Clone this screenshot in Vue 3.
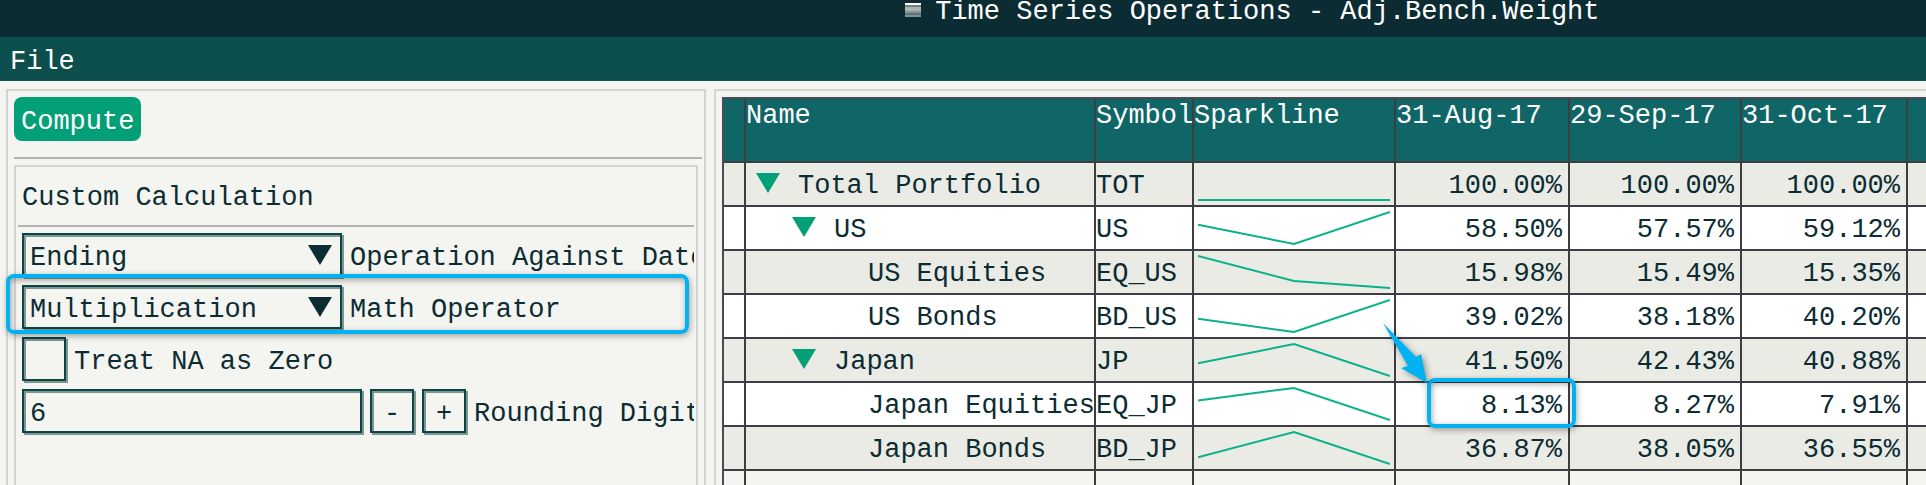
<script setup>
import { ref } from 'vue'

const dates = ['31-Aug-17', '29-Sep-17', '31-Oct-17']

const rows = [
  { name: 'Total Portfolio', symbol: 'TOT', level: 0, group: true, values: [100, 100, 100] },
  { name: 'US', symbol: 'US', level: 1, group: true, values: [58.5, 57.57, 59.12] },
  { name: 'US Equities', symbol: 'EQ_US', level: 2, values: [15.98, 15.49, 15.35] },
  { name: 'US Bonds', symbol: 'BD_US', level: 2, values: [39.02, 38.18, 40.2] },
  { name: 'Japan', symbol: 'JP', level: 1, group: true, values: [41.5, 42.43, 40.88] },
  { name: 'Japan Equities', symbol: 'EQ_JP', level: 2, values: [8.13, 8.27, 7.91], marked: true },
  { name: 'Japan Bonds', symbol: 'BD_JP', level: 2, values: [36.87, 38.05, 36.55] },
]

const operation = ref('Ending')
const operator = ref('Multiplication')
const treatNa = ref(false)
const digits = ref(6)

const percent = (v) => v.toFixed(2) + '%'

function sparkline(values) {
  const low = Math.min(...values)
  const range = Math.max(...values) - low || 1
  return values.map((v, i) => `${i * 96},${37 - ((v - low) / range) * 32}`).join(' ')
}
</script>

<template>
  <div class="app">
    <header class="titlebar">
      <div class="title">
        <svg class="title-icon" width="16" height="16" viewBox="0 0 16 16" aria-hidden="true">
          <path d="M0 1h16v2H0z" fill="#fff" />
          <path d="M0 3h16v2H0z" fill="#6d8084" />
          <path d="M0 5h16v4H0z" fill="#a9b4b6" />
          <path d="M0 9h16v2H0z" fill="#84959a" />
          <path d="M0 11h16v2H0z" fill="#5b7278" />
          <path d="M0 13h16v2H0z" fill="#7f9195" />
        </svg>
        <span>Time Series Operations - Adj.Bench.Weight</span>
      </div>
    </header>

    <nav class="menubar"><button type="button" class="menu">File</button></nav>

    <main class="body">
      <section class="side">
        <button type="button" class="compute">Compute</button>
        <hr class="rule">
        <form class="group" @submit.prevent>
          <h2 class="heading">Custom Calculation</h2>
          <hr class="rule">
          <div class="fields">
            <div class="field">
              <div class="combo">
                <select id="operation" v-model="operation" class="box">
                  <option>Ending</option>
                  <option>Beginning</option>
                </select>
                <svg class="combo-arrow" width="24" height="20" viewBox="0 0 24 20"><path d="M0 0h24L12 20z" /></svg>
              </div>
              <label for="operation">Operation Against Date</label>
            </div>
            <div class="field">
              <div class="combo">
                <select id="operator" v-model="operator" class="box">
                  <option>Multiplication</option>
                  <option>Division</option>
                </select>
                <svg class="combo-arrow" width="24" height="20" viewBox="0 0 24 20"><path d="M0 0h24L12 20z" /></svg>
              </div>
              <label for="operator">Math Operator</label>
              <span class="mark mark-field"></span>
            </div>
            <div class="field">
              <input id="treat-na" v-model="treatNa" type="checkbox" class="box check">
              <label for="treat-na">Treat NA as Zero</label>
            </div>
            <div class="field">
              <input id="digits" v-model="digits" type="text" class="box number">
              <button type="button" class="box step" aria-label="Decrease" @click="digits--">-</button>
              <button type="button" class="box step" aria-label="Increase" @click="digits++">+</button>
              <label for="digits">Rounding Digits</label>
            </div>
          </div>
        </form>
      </section>

      <section class="content">
        <table class="grid">
          <colgroup>
            <col class="c-handle"><col class="c-name"><col class="c-symbol"><col class="c-spark">
            <col class="c-first"><col class="c-second"><col class="c-third"><col>
          </colgroup>
          <thead>
            <tr>
              <th></th>
              <th>Name</th>
              <th>Symbol</th>
              <th>Sparkline</th>
              <th v-for="d in dates" :key="d">{{ d }}</th>
              <th></th>
            </tr>
          </thead>
          <tbody>
            <tr v-for="row in rows" :key="row.symbol">
              <td></td>
              <td>
                <div class="name" :class="'level-' + row.level">
                  <button v-if="row.group" type="button" class="toggle" :aria-label="'Collapse ' + row.name">
                    <svg width="24" height="20" viewBox="0 0 24 20"><path d="M0 0h24L12 20z" /></svg>
                  </button>
                  <span>{{ row.name }}</span>
                </div>
              </td>
              <td>{{ row.symbol }}</td>
              <td class="spark">
                <svg width="192" height="42" viewBox="0 0 192 42"><polyline :points="sparkline(row.values)" /></svg>
              </td>
              <td v-for="(v, i) in row.values" :key="i" class="value">
                {{ percent(v) }}
                <template v-if="row.marked && i === 0">
                  <span class="mark mark-cell"></span>
                  <svg class="pointer" width="60" height="72" viewBox="0 0 60 72" aria-hidden="true">
                    <path d="M3 3 36 37 41 34 47 63 21 48 28 46z" />
                  </svg>
                </template>
              </td>
              <td></td>
            </tr>
            <tr class="rest"><td v-for="n in 8" :key="n"></td></tr>
          </tbody>
        </table>
      </section>
    </main>
  </div>
</template>

<style>
body {
  background: #f4f5f0;
}
</style>

<style scoped>
.app {
  --ink: #0c2c33;
  --line: #3e3d42;
  --accent: #03a077;
  display: flex;
  flex-direction: column;
  height: 100vh;
  overflow: hidden;
  background: #f4f5f0;
  color: var(--ink);
  font: 27px/38px "Liberation Mono", monospace;
  white-space: nowrap;
}
.app * {
  box-sizing: border-box;
}
button, input, select {
  margin: 0;
  border: 0;
  padding: 0;
  background: none;
  color: inherit;
  font: inherit;
}
.titlebar {
  display: grid;
  grid-template-columns: 47fr 53fr;
  flex: none;
  padding-bottom: 13px;
  background: #0c2c33;
  color: #fff;
  line-height: 24px;
}
.title {
  display: flex;
  grid-column: 2;
  gap: 14px;
}
.title-icon {
  margin-top: 2px;
}
.menubar {
  display: flex;
  flex: none;
  padding: 6px 10px 0;
  background: #0d4f4d;
  color: #fff;
}
.body {
  display: flex;
  flex: 1;
  gap: 8px;
  min-height: 0;
  padding: 8px 0 0 6px;
}
.side {
  display: flex;
  flex-direction: column;
  flex: none;
  width: 700px;
  border: 2px solid #d3d3d4;
  border-bottom: 0;
  padding: 6px 2px 0 6px;
}
.compute {
  align-self: flex-start;
  height: 44px;
  border-radius: 8px;
  padding: 6px 7px 0;
  background: var(--accent);
  color: #fff;
}
.rule {
  flex: none;
  width: 100%;
  height: 2px;
  margin: 16px 0 6px;
  border: 0;
  background: #b1b2b1;
}
.group {
  flex: 1;
  margin-right: 4px;
  border: 2px solid #d3d3d4;
  border-bottom: 0;
  padding: 12px 2px 0;
}
.heading {
  margin: 0;
  padding-left: 4px;
  font: inherit;
}
.group .rule {
  margin: 8px 0 6px;
}
.fields {
  display: flex;
  flex-direction: column;
  gap: 8px;
  padding-left: 4px;
}
.field {
  position: relative;
  display: flex;
  gap: 8px;
}
.field label {
  min-width: 0;
  overflow: hidden;
  padding-top: 6px;
}
.box {
  appearance: none;
  flex: none;
  height: 44px;
  border: 2px solid #0d4545;
  border-radius: 0;
  padding: 6px 6px 0;
  box-shadow: 2px 2px 0 #7f9794, inset 2px 2px 0 #7f9794;
  line-height: 34px;
  outline: none;
}
.combo {
  position: relative;
  flex: none;
  width: 320px;
}
.combo .box {
  display: block;
  width: 100%;
}
.combo-arrow {
  position: absolute;
  top: 12px;
  right: 10px;
  fill: var(--ink);
  pointer-events: none;
}
.check, .step {
  width: 44px;
}
.check:checked {
  background: var(--accent);
}
.step {
  padding: 6px 0 0;
  text-align: center;
}
.number {
  width: 340px;
}
.mark {
  position: absolute;
  z-index: 1;
  border: 4px solid #00b2f2;
  border-radius: 8px;
  box-shadow: 1px 2px 6px rgba(0, 0, 0, 0.35), inset 1px 2px 6px rgba(0, 0, 0, 0.35);
  pointer-events: none;
}
.mark-field {
  top: -11px;
  right: 5px;
  bottom: -5px;
  left: -16px;
}
.content {
  flex: 1;
  min-width: 0;
  border: 2px solid #d3d3d4;
  border-width: 2px 0 0 2px;
  padding: 6px 0 0 6px;
}
.grid {
  width: 100%;
  border: 2px solid #4b4a52;
  border-width: 2px 0 0 2px;
  border-spacing: 0;
  table-layout: fixed;
}
.c-handle { width: 22px; }
.c-name { width: 350px; }
.c-symbol { width: 98px; }
.c-spark { width: 202px; }
.c-first { width: 174px; }
.c-second { width: 172px; }
.c-third { width: 166px; }
th, td {
  border-right: 2px solid var(--line);
  border-bottom: 2px solid var(--line);
  text-align: left;
}
th:last-child, td:last-child {
  border-right: 0;
}
th {
  height: 64px;
  padding: 0;
  background: #106666;
  color: #fff;
  font-weight: 400;
  line-height: 34px;
  vertical-align: top;
}
td {
  position: relative;
  height: 44px;
  padding: 4px 0 0;
  background: #fff;
}
tr:nth-child(odd) td {
  background: #eaebe4;
}
tr.rest td {
  height: 120px;
  background: #f4f5f0;
}
.name {
  display: flex;
  align-items: flex-start;
  gap: 18px;
}
.level-0 { padding-left: 10px; }
.level-1 { padding-left: 46px; }
.level-2 { padding-left: 122px; }
.toggle {
  height: 20px;
  margin-top: 6px;
  line-height: 0;
}
.toggle svg {
  fill: var(--accent);
}
.spark {
  padding: 0 4px;
}
.spark svg {
  display: block;
}
.spark polyline {
  fill: none;
  stroke: #0bb189;
  stroke-width: 2;
}
.value {
  padding-right: 6px;
  text-align: right;
}
.mark-cell {
  top: -5px;
  right: -8px;
  bottom: -3px;
  left: 31px;
}
.pointer {
  position: absolute;
  z-index: 2;
  top: -63px;
  left: -16px;
  fill: #00b2f2;
  filter: drop-shadow(2px 2px 3px rgba(0, 0, 0, 0.4));
  pointer-events: none;
}
</style>
